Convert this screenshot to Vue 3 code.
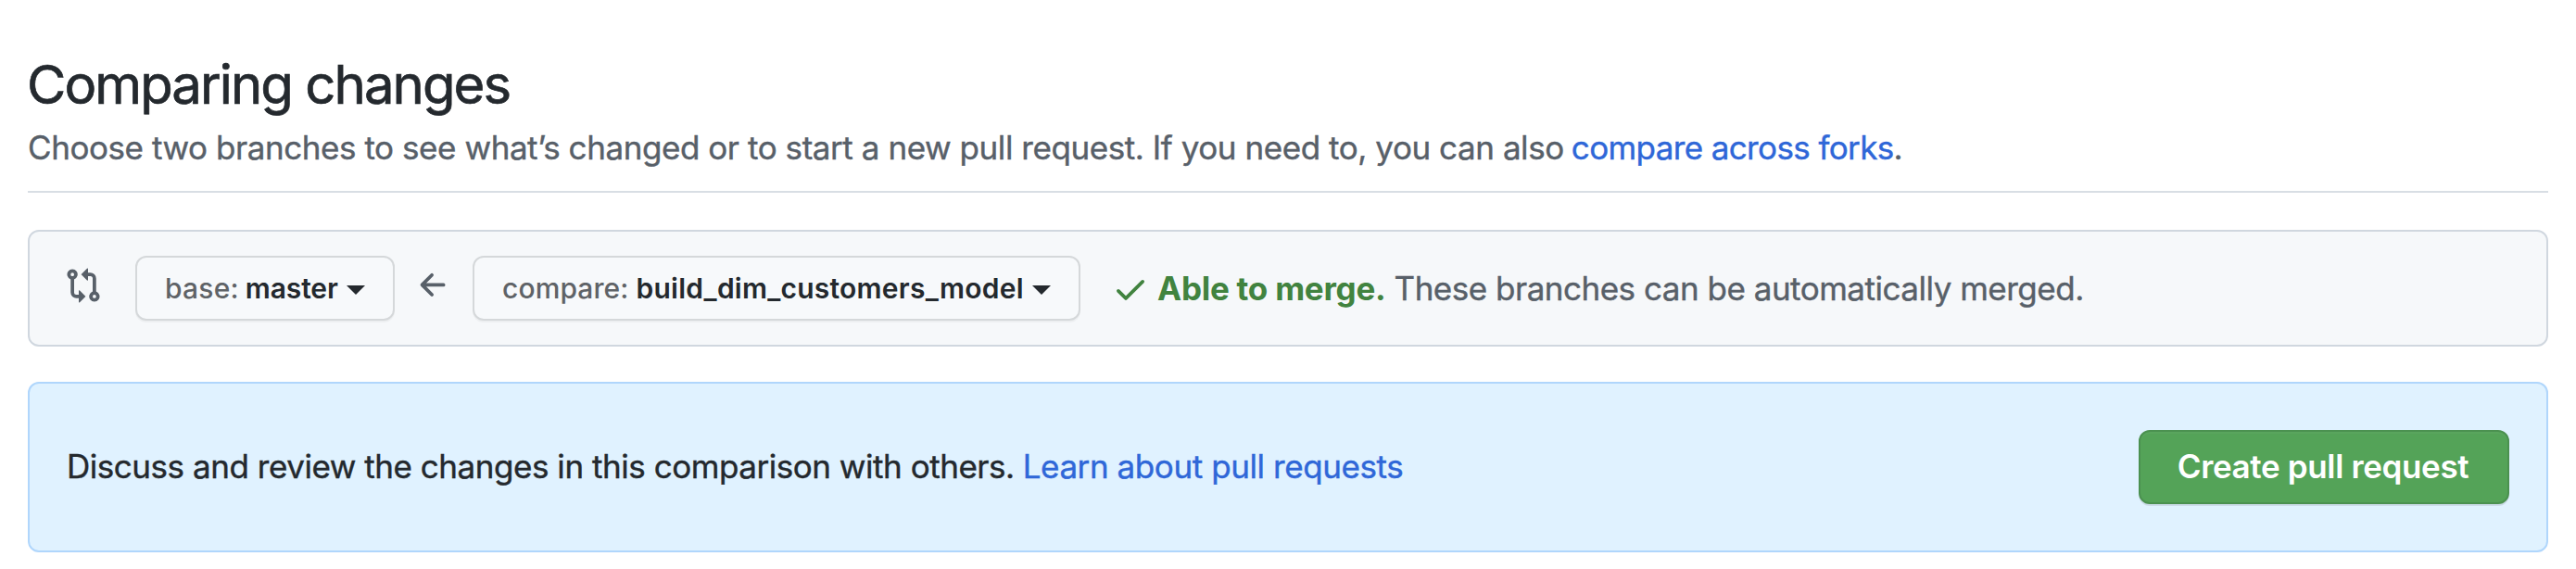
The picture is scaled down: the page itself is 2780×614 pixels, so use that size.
<script setup>
const branches = { base: 'master', compare: 'build_dim_customers_model' }
</script>

<template>
  <main class="page">
    <header class="head">
      <h1>Comparing changes</h1>
      <p><span class="lead">Choose two branches to see what’s changed or to start a new pull request. If you need to, you can also</span><a class="forks">compare across forks</a><span>.</span></p>
    </header>

    <section class="range">
      <svg class="icon" viewBox="0 0 16 16"><path fill-rule="evenodd" d="M9.573.677L7.177 3.073a.25.25 0 000 .354l2.396 2.396A.25.25 0 0010 5.646V4h1a1 1 0 011 1v5.628a2.251 2.251 0 101.5 0V5A2.5 2.5 0 0011 2.5h-1V.854a.25.25 0 00-.427-.177zM6 12v-1.646a.25.25 0 01.427-.177l2.396 2.396a.25.25 0 010 .354l-2.396 2.396A.25.25 0 016 15.146V13.5H5A2.5 2.5 0 012.5 11V5.372a2.25 2.25 0 111.5 0V11a1 1 0 001 1h1zM4 3.25a.75.75 0 10-1.5 0 .75.75 0 001.5 0zM12.75 12a.75.75 0 100 1.5.75.75 0 000-1.5z" /></svg>
      <button class="branch base">
        <span class="kind">base:</span><span class="name">{{ branches.base }}</span><i class="caret" />
      </button>
      <svg class="icon arrow" viewBox="0 0 16 16"><path fill-rule="evenodd" d="M7.78 12.53a.75.75 0 01-1.06 0L2.47 8.28a.75.75 0 010-1.06l4.25-4.25a.75.75 0 011.06 1.06L4.81 7h7.44a.75.75 0 010 1.5H4.81l2.97 2.97a.75.75 0 010 1.06z" /></svg>
      <button class="branch compare">
        <span class="kind">compare:</span><span class="name">{{ branches.compare }}</span><i class="caret" />
      </button>
      <svg class="icon check" viewBox="0 0 16 16"><path fill-rule="evenodd" d="M13.78 4.22a.75.75 0 010 1.06l-7.25 7.25a.75.75 0 01-1.06 0L2.22 9.28a.75.75 0 011.06-1.06L6 10.94l6.72-6.72a.75.75 0 011.06 0z" /></svg>
      <strong class="able">Able to merge.</strong>
      <span class="detail">These branches can be automatically merged.</span>
    </section>

    <section class="discuss">
      <span class="text">Discuss and review the changes in this comparison with others.</span>
      <a class="learn">Learn about pull requests</a>
      <button class="create">Create pull request</button>
    </section>
  </main>
</template>

<style>
body { background: #fff; }
</style>

<style scoped>
.page {
  box-sizing: border-box;
  height: 614px;
  padding: 60px 30px 0;
  font: 400 35px/50px Inter, "Liberation Sans", sans-serif;
  color: #24292e;
  white-space: nowrap;
  overflow: hidden;
}
.head {
  color: #586069;
  border-bottom: 2px solid #d8dee4;
  padding-bottom: 22px;
}
h1 {
  margin: 0 0 12px -1px;
  font-size: 58px;
  line-height: 62px;
  font-weight: 400;
  letter-spacing: -1.92px;
  color: #24292e;
  -webkit-text-stroke: 0.7px;
}
p { margin: 0; display: flex; }
p, .detail, .text, .learn { -webkit-text-stroke: 0.4px; }
.lead { letter-spacing: -0.435px; margin-right: 8px; }
.forks { letter-spacing: -0.62px; }
a { color: #2f67d8; }
.range, .discuss {
  box-sizing: border-box;
  display: flex;
  align-items: center;
  border-radius: 12px;
}
.range {
  height: 126px;
  margin-top: 40px;
  padding-left: 38px;
  background: #f6f8fa;
  border: 2px solid #d0d7df;
}
.icon {
  width: 40px;
  height: 40px;
  flex: none;
  fill: #586069;
  margin-bottom: 6px;
}
.arrow { margin-left: 22px; }
.check { fill: #41833f; margin: 2px 0 0 34px; }
.branch {
  box-sizing: border-box;
  height: 70px;
  display: flex;
  align-items: center;
  padding: 0 0 0 30px;
  border: 2px solid #d5d8da;
  border-radius: 12px;
  background: #f7f9fb;
  box-shadow: 0 2px 0 rgba(27, 31, 35, 0.04);
  font: 500 30px/40px Inter, "Liberation Sans", sans-serif;
  color: #24292e;
}
.base { width: 280px; margin-left: 36px; }
.compare { width: 656px; margin-left: 22px; }
.kind { color: #5f6367; letter-spacing: 0.2px; margin-right: 7px; }
.compare .kind { letter-spacing: 0.1px; margin-right: 8px; }
.name { font-weight: 600; letter-spacing: -0.1px; }
.compare .name { letter-spacing: 0.24px; }
.caret {
  margin-left: 9px;
  border: 10px solid transparent;
  border-top-color: #24292e;
  border-bottom: 0;
  margin-top: 4px;
}
.able {
  margin-left: 9px;
  color: #41833f;
  font-weight: 700;
  letter-spacing: -0.24px;
}
.detail { margin-left: 9px; color: #586069; letter-spacing: -0.49px; }
.discuss {
  height: 184px;
  margin-top: 38px;
  padding: 0 40px;
  background: #e0f2ff;
  border: 2px solid #b0d6fc;
}
.text { letter-spacing: -0.46px; margin-bottom: 2px; }
.learn { letter-spacing: -0.42px; margin: 0 0 2px 9px; }
.create {
  box-sizing: border-box;
  width: 400px;
  height: 80px;
  margin-left: auto;
  padding: 0 2px 2px 0;
  border: 2px solid #4b9150;
  border-radius: 12px;
  background: #54a358;
  box-shadow: 0 2px 0 rgba(27, 31, 35, 0.1), inset 0 2px 0 rgba(255, 255, 255, 0.03);
  color: #fff;
  font: 600 35px/50px Inter, "Liberation Sans", sans-serif;
  letter-spacing: -0.36px;
}
</style>
